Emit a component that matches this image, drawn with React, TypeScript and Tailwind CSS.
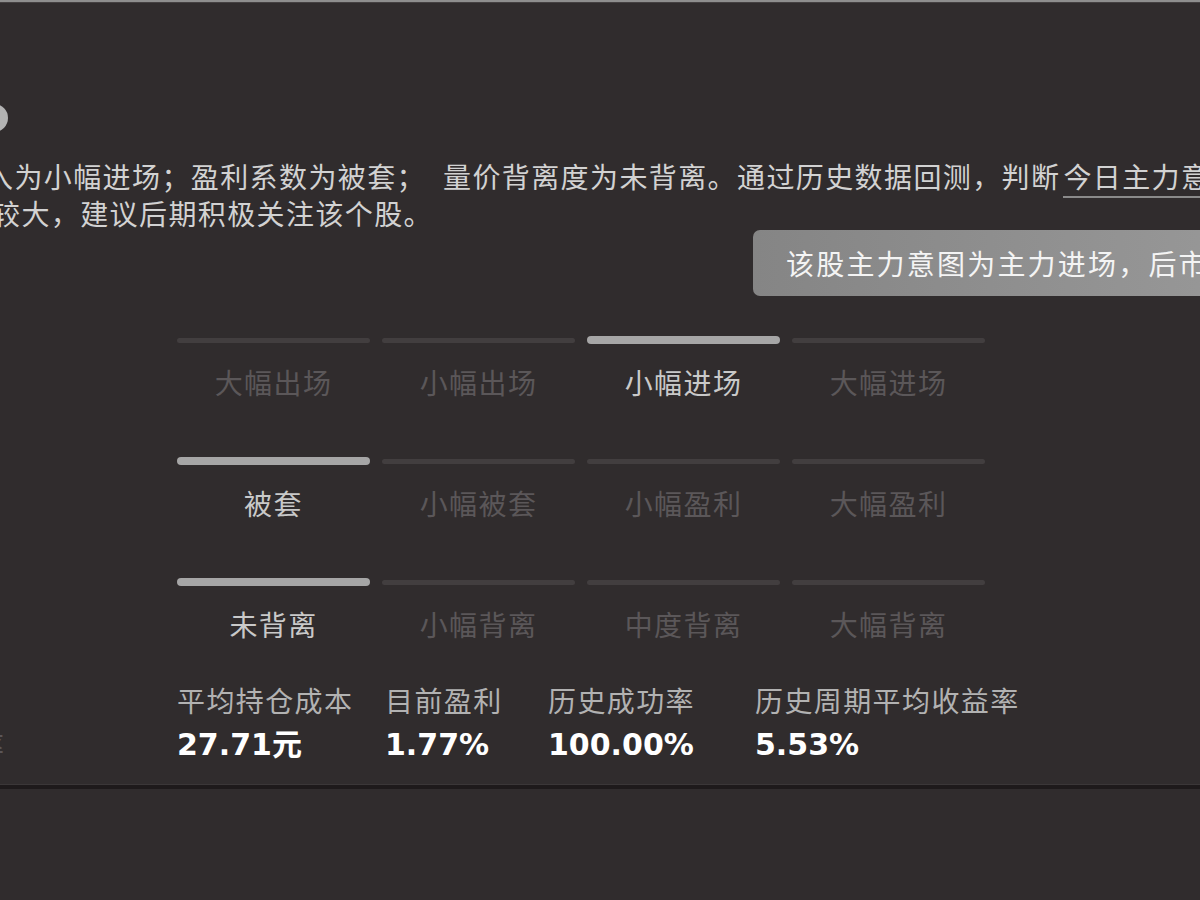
import React from "react";

const rows = [
  { items: ["大幅出场", "小幅出场", "小幅进场", "大幅进场"], active: 2 },
  { items: ["被套", "小幅被套", "小幅盈利", "大幅盈利"], active: 0 },
  { items: ["未背离", "小幅背离", "中度背离", "大幅背离"], active: 0 },
];

const stats = [
  { label: "平均持仓成本", value: "27.71元", width: "w-[208px]" },
  { label: "目前盈利", value: "1.77%", width: "w-[163px]" },
  { label: "历史成功率", value: "100.00%", width: "w-[207px]" },
  { label: "历史周期平均收益率", value: "5.53%", width: "w-[300px]" },
];

const App = () => {
  return (
    <div className="w-[1200px] h-[900px] overflow-hidden bg-[#302c2d] font-['Noto_Sans_CJK_SC',sans-serif]">
      {/* верхняя граница */}
      <div className="h-[2px] bg-[#8e8e8e]" />
      <div className="h-[1px] bg-[#444041]" />

      {/* кружок слева */}
      <div className="mt-[101px] -ml-[20px] w-[28px] h-[28px] rounded-full bg-[#b3b3b3]" />

      {/* описание */}
      <div className="mt-[26px] text-[28px] leading-[37px] tracking-[1.4px] text-[#d2d2d2] whitespace-nowrap">
        <div className="-ml-[15px]">
          入为小幅进场；盈利系数为被套；
          <span className="ml-[17px]">量价背离度为未背离。通过历史数据回测，判断</span>
          <span className="ml-[3px] border-b-2 border-[#8a8a8a]">今日主力意图为主力进场</span>
        </div>
        <div className="-ml-[8px]">较大，建议后期积极关注该个股。</div>
      </div>

      {/* подсказка */}
      <div className="-mt-[2px] ml-[753px] w-[600px] h-[66px] rounded-[7px] bg-gradient-to-r from-[#858585] to-[#9c9c9c] flex items-center pl-[33px] whitespace-nowrap">
        <span className="text-[28px] tracking-[2.2px] text-[#f4f4f4]">
          该股主力意图为主力进场，后市看涨
        </span>
      </div>

      {/* шкалы */}
      <div className="mt-[40px] ml-[177px] grid grid-cols-[193px_193px_193px_193px] gap-x-[12px] gap-y-[56px]">
        {rows.map((row, ri) =>
          row.items.map((item, i) => (
            <div key={ri + "-" + i} className="flex flex-col items-center">
              <div className="h-[8px] w-full flex items-center">
                {i === row.active ? (
                  <div className="h-[8px] w-full rounded-full bg-[#a6a6a6]" />
                ) : (
                  <div className="h-[5px] w-full rounded-full bg-[#423e3f]" />
                )}
              </div>
              <div
                className={
                  "mt-[20px] text-[28px] leading-[37px] tracking-[1.4px] " +
                  (i === row.active ? "text-[#c9c9c9]" : "text-[#5b5759]")
                }
              >
                {item}
              </div>
            </div>
          ))
        )}
      </div>

      {/* статистика */}
      <div className="mt-[39px] flex whitespace-nowrap">
        <div className="w-[177px] overflow-hidden">
          <div className="h-[37px]" />
          <div className="mt-[8px] h-[36px] -ml-[24px] text-[28px] leading-[36px] text-[#5a5658]">率</div>
        </div>
        {stats.map((s) => (
          <div key={s.label} className={s.width}>
            <div className="text-[28px] leading-[37px] tracking-[1.4px] text-[#b2b2b2]">{s.label}</div>
            <div className="mt-[8px] text-[30px] leading-[36px] font-bold text-white font-['DejaVu_Sans','Noto_Sans_CJK_SC',sans-serif]">
              {s.value}
            </div>
          </div>
        ))}
      </div>

      {/* разделитель */}
      <div className="mt-[21px] h-[1px] bg-[#3b3738]" />
      <div className="h-[4px] bg-[#1e1a1b]" />
    </div>
  );
};

export default App;
